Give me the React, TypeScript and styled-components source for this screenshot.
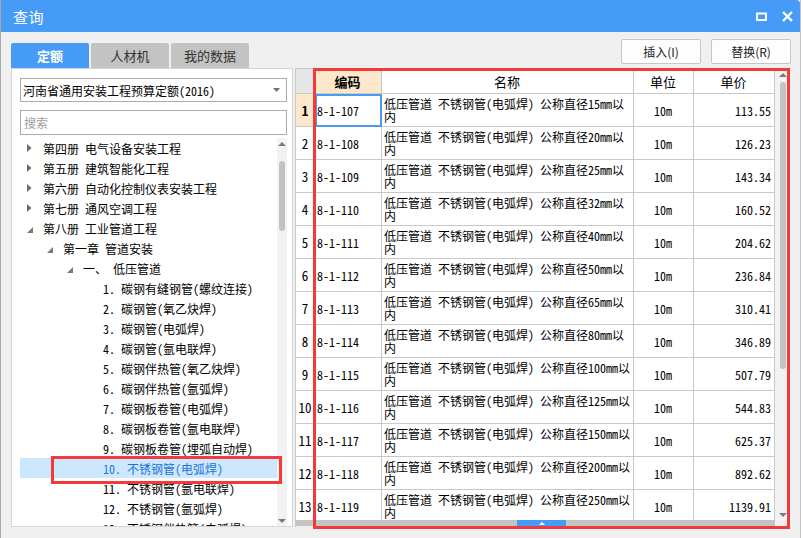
import React from 'react';
import styled, { createGlobalStyle } from 'styled-components';

const colors = {
  blue: '#469bf6',
  panelBg: '#f0f0f0',
  grid: '#c9c9c9',
  accent: '#fde8cb',
  mark: '#f23a3a',
  selectBg: '#cce8ff',
  selectText: '#1f73d6',
  tabIdle: '#c3c3c3',
};

const uiFont = `"Noto Sans CJK SC", "Microsoft YaHei", sans-serif`;

const GlobalStyle = createGlobalStyle`
  html, body {
    margin: 0;
    padding: 0;
    background: #fff;
    overflow: hidden;
  }
  *, *::before, *::after {
    box-sizing: border-box;
  }
`;

const Window = styled.div`
  width: 801px;
  height: 538px;
  display: flex;
  flex-direction: column;
  background: ${colors.panelBg};
  border-left: 1px solid #a9a9a9;
  border-right: 1px solid #c4c4c4;
  font-family: ${uiFont};
  overflow: hidden;
`;

const TitleBar = styled.header`
  flex: none;
  height: 32px;
  display: flex;
  align-items: center;
  justify-content: space-between;
  padding: 0 7px 0 12px;
  background: ${colors.blue};
  color: #fff;
  border-top-right-radius: 4px;
`;

const Title = styled.h1`
  margin: 0;
  font-size: 15px;
  font-weight: normal;
  letter-spacing: 0.5px;
`;

const WindowControls = styled.div`
  display: flex;
  align-items: center;
  gap: 15px;

  svg {
    display: block;
  }
`;

const TopRow = styled.div`
  flex: none;
  height: 36px;
  display: flex;
  justify-content: space-between;
  padding: 0 9px 0 10px;
`;

const Tabs = styled.nav`
  display: flex;
  gap: 2px;
  align-self: flex-end;
`;

const Tab = styled.button<{ $active?: boolean }>`
  width: 78px;
  height: 25px;
  padding: 0;
  border: none;
  border-radius: 2px 2px 0 0;
  font-family: ${uiFont};
  font-size: 13px;
  font-weight: ${(p) => (p.$active ? 'bold' : 'normal')};
  background: ${(p) => (p.$active ? colors.blue : colors.tabIdle)};
  color: ${(p) => (p.$active ? '#fff' : '#333')};
`;

const Actions = styled.div`
  display: flex;
  gap: 10px;
  padding-top: 7px;
`;

const ActionButton = styled.button`
  width: 80px;
  height: 25px;
  padding: 0;
  background: #fdfdfd;
  border: 1px solid #c6c6c6;
  border-radius: 2px;
  font-family: ${uiFont};
  font-size: 12px;
  color: #222;
`;

const Main = styled.main`
  flex: 1;
  min-height: 0;
  display: flex;
  gap: 2px;
  padding: 0 9px 11px 10px;
`;

/* ---------- left: catalogue tree ---------- */

const LeftPanel = styled.section`
  width: 282px;
  flex: none;
  display: flex;
  flex-direction: column;
  padding: 9px 5px 0 8px;
  background: #fff;
  border: 1px solid #d5d5d5;
  font-family: ${uiFont};
  font-size: 12px;
  font-feature-settings: 'hwid';
`;

const Select = styled.div`
  height: 24px;
  flex: none;
  display: flex;
  align-items: center;
  justify-content: space-between;
  padding: 0 6px 0 2px;
  border: 1px solid #ababab;
  color: #000;
`;

const SearchBox = styled.input`
  height: 25px;
  flex: none;
  margin-top: 8px;
  padding: 0 3px;
  border: 1px solid #ababab;
  outline: none;
  font-family: ${uiFont};
  font-size: 12px;

  &::placeholder {
    color: #a0a0a0;
  }
`;

const TreeArea = styled.div`
  flex: 1;
  min-height: 0;
  display: flex;
  margin-top: 3px;
`;

const TreeList = styled.ul`
  flex: 1;
  margin: 0;
  padding: 0;
  list-style: none;
  overflow-x: visible;
  overflow-y: clip;
`;

const TreeRow = styled.li<{ $level: number; $selected?: boolean; $marked?: boolean }>`
  position: relative;
  height: 20px;
  display: flex;
  align-items: center;
  padding-left: ${(p) => 7 + p.$level * 20}px;
  white-space: nowrap;
  background: ${(p) => (p.$selected ? colors.selectBg : 'transparent')};
  color: ${(p) => (p.$selected ? colors.selectText : '#000')};

  ${(p) =>
    p.$marked &&
    `
    &::after {
      content: '';
      position: absolute;
      left: 31px;
      top: -2px;
      width: 231px;
      height: 28px;
      border: 3px solid ${colors.mark};
      z-index: 1;
    }
  `}
`;

const Toggle = styled.span`
  width: 16px;
  flex: none;
  display: flex;
  align-items: center;

  svg {
    display: block;
  }
`;

const ScrollTrack = styled.div<{ $width: number }>`
  width: ${(p) => p.$width}px;
  flex: none;
  display: flex;
  flex-direction: column;
  align-items: center;
  background: #f2f2f2;
`;

const ScrollArrow = styled.div<{ $down?: boolean }>`
  width: 0;
  height: 0;
  margin: ${(p) => (p.$down ? 'auto 0 3px' : '4px 0 0')};
  border-left: 4px solid transparent;
  border-right: 4px solid transparent;
  ${(p) => (p.$down ? 'border-top: 4px solid #7a7a7a;' : 'border-bottom: 4px solid #7a7a7a;')}
`;

const ScrollThumb = styled.div<{ $top: number; $height: number }>`
  width: 6px;
  height: ${(p) => p.$height}px;
  margin-top: ${(p) => p.$top}px;
  border-radius: 3px;
  background: #c3c3c3;
`;

/* ---------- right: quota table ---------- */

const RightPanel = styled.section`
  position: relative;
  flex: 1;
  display: flex;
  flex-direction: column;
  border-left: 1px solid ${colors.grid};
  border-top: 1px solid ${colors.grid};
  font-family: ${uiFont};
  font-size: 12px;
  font-feature-settings: 'hwid';
`;

const GridArea = styled.div`
  height: 451px;
  flex: none;
  display: flex;
  background: #fff;
`;

const Table = styled.div`
  width: 479px;
  flex: none;
  overflow: hidden;
`;

const Row = styled.div<{ $header?: boolean }>`
  display: grid;
  grid-template-columns: 19px 67px 252px 60px 81px;
  height: ${(p) => (p.$header ? 25 : 33)}px;
`;

const Cell = styled.div<{
  $align?: 'left' | 'center' | 'right';
  $bg?: string;
  $bold?: boolean;
  $focus?: boolean;
  $size?: number;
}>`
  display: flex;
  align-items: center;
  justify-content: ${(p) =>
    p.$align === 'center' ? 'center' : p.$align === 'right' ? 'flex-end' : 'flex-start'};
  padding: 0 3px 0 2px;
  border-right: 1px solid ${colors.grid};
  border-bottom: 1px solid ${colors.grid};
  background: ${(p) => p.$bg || 'transparent'};
  font-weight: ${(p) => (p.$bold ? 'bold' : 'normal')};
  font-size: ${(p) => p.$size || 12}px;
  line-height: 13px;
  color: #000;
  overflow: hidden;
  ${(p) => p.$focus && `outline: 2px solid #4b9bf3; outline-offset: -2px;`}
`;

const RowNumber = styled(Cell)`
  padding: 0;
`;

const HScroll = styled.div`
  width: 479px;
  height: 6px;
  flex: none;
  display: flex;
  background: #c4c4c4;
`;

const CollapseHandle = styled.div`
  width: 49px;
  margin-left: 221px;
  display: flex;
  align-items: center;
  justify-content: center;
  background: ${colors.blue};

  &::before {
    content: '';
    border-left: 3px solid transparent;
    border-right: 3px solid transparent;
    border-bottom: 3px solid #fff;
  }
`;

const Mark = styled.div`
  position: absolute;
  left: 17px;
  top: -1px;
  width: 477px;
  height: 461px;
  border: 3px solid ${colors.mark};
  pointer-events: none;
  z-index: 2;
`;

type TreeNode = { label: string; level: number; state?: 'open' | 'closed'; selected?: boolean };

const tree: TreeNode[] = [
  { label: '第四册 电气设备安装工程', level: 0, state: 'closed' },
  { label: '第五册 建筑智能化工程', level: 0, state: 'closed' },
  { label: '第六册 自动化控制仪表安装工程', level: 0, state: 'closed' },
  { label: '第七册 通风空调工程', level: 0, state: 'closed' },
  { label: '第八册 工业管道工程', level: 0, state: 'open' },
  { label: '第一章 管道安装', level: 1, state: 'open' },
  { label: '一、 低压管道', level: 2, state: 'open' },
  { label: '1. 碳钢有缝钢管(螺纹连接)', level: 3 },
  { label: '2. 碳钢管(氧乙炔焊)', level: 3 },
  { label: '3. 碳钢管(电弧焊)', level: 3 },
  { label: '4. 碳钢管(氩电联焊)', level: 3 },
  { label: '5. 碳钢伴热管(氧乙炔焊)', level: 3 },
  { label: '6. 碳钢伴热管(氩弧焊)', level: 3 },
  { label: '7. 碳钢板卷管(电弧焊)', level: 3 },
  { label: '8. 碳钢板卷管(氩电联焊)', level: 3 },
  { label: '9. 碳钢板卷管(埋弧自动焊)', level: 3 },
  { label: '10. 不锈钢管(电弧焊)', level: 3, selected: true },
  { label: '11. 不锈钢管(氩电联焊)', level: 3 },
  { label: '12. 不锈钢管(氩弧焊)', level: 3 },
  { label: '13. 不锈钢伴热管(电弧焊)', level: 3 },
];

const quotas = [
  ['8-1-107', '15', '113.55'],
  ['8-1-108', '20', '126.23'],
  ['8-1-109', '25', '143.34'],
  ['8-1-110', '32', '160.52'],
  ['8-1-111', '40', '204.62'],
  ['8-1-112', '50', '236.84'],
  ['8-1-113', '65', '310.41'],
  ['8-1-114', '80', '346.89'],
  ['8-1-115', '100', '507.79'],
  ['8-1-116', '125', '544.83'],
  ['8-1-117', '150', '625.37'],
  ['8-1-118', '200', '892.62'],
  ['8-1-119', '250', '1139.91'],
];

const ToggleIcon = ({ state }: { state?: 'open' | 'closed' }) => {
  if (state === 'closed') {
    return (
      <svg width="5" height="8" viewBox="0 0 5 8">
        <path d="M0 0 L4.5 4 L0 8 Z" fill="#6b6b6b" />
      </svg>
    );
  }
  if (state === 'open') {
    return (
      <svg width="6" height="6" viewBox="0 0 6 6" style={{ marginTop: 4 }}>
        <path d="M6 0 L6 6 L0 6 Z" fill="#7a7a7a" />
      </svg>
    );
  }
  return null;
};

const App = () => {
  return (
    <>
      <GlobalStyle />
      <Window>
        <TitleBar>
          <Title>查询</Title>
          <WindowControls>
            <svg width="11" height="9" viewBox="0 0 11 9">
              <rect x="1" y="1.5" width="9" height="6.5" fill="none" stroke="#fff" strokeWidth="2" />
            </svg>
            <svg width="11" height="11" viewBox="0 0 11 11">
              <path d="M1 1 L10 10 M10 1 L1 10" stroke="#fff" strokeWidth="2.4" />
            </svg>
          </WindowControls>
        </TitleBar>

        <TopRow>
          <Tabs>
            <Tab $active>定额</Tab>
            <Tab>人材机</Tab>
            <Tab>我的数据</Tab>
          </Tabs>
          <Actions>
            <ActionButton>插入(I)</ActionButton>
            <ActionButton>替换(R)</ActionButton>
          </Actions>
        </TopRow>

        <Main>
          <LeftPanel>
            <Select>
              <span>河南省通用安装工程预算定额(2016)</span>
              <svg width="7" height="4" viewBox="0 0 7 4">
                <path d="M0 0 L7 0 L3.5 4 Z" fill="#707070" />
              </svg>
            </Select>
            <SearchBox placeholder="搜索" />
            <TreeArea>
              <TreeList>
                {tree.map((node) => (
                  <TreeRow
                    key={node.label}
                    $level={node.level}
                    $selected={node.selected}
                    $marked={node.selected}
                  >
                    <Toggle>
                      <ToggleIcon state={node.state} />
                    </Toggle>
                    {node.label}
                  </TreeRow>
                ))}
              </TreeList>
              <ScrollTrack $width={10}>
                <ScrollArrow />
                <ScrollThumb $top={15} $height={70} />
                <ScrollArrow $down />
              </ScrollTrack>
            </TreeArea>
          </LeftPanel>

          <RightPanel>
            <GridArea>
              <Table>
                <Row $header>
                  <Cell $bg="#e6e6e6" />
                  <Cell $align="center" $bg={colors.accent} $bold $size={13}>
                    编码
                  </Cell>
                  <Cell $align="center" $size={13}>名称</Cell>
                  <Cell $align="center" $size={13}>单位</Cell>
                  <Cell $align="center" $size={13}>单价</Cell>
                </Row>
                {quotas.map(([code, size, price], i) => (
                  <Row key={code}>
                    <RowNumber
                      $align="center"
                      $size={13}
                      $bold={i === 0}
                      $bg={i === 0 ? colors.accent : undefined}
                    >
                      {i + 1}
                    </RowNumber>
                    <Cell $focus={i === 0}>{code}</Cell>
                    <Cell>{`低压管道 不锈钢管(电弧焊) 公称直径${size}mm以内`}</Cell>
                    <Cell $align="center">10m</Cell>
                    <Cell $align="right">{price}</Cell>
                  </Row>
                ))}
              </Table>
              <ScrollTrack $width={16}>
                <ScrollArrow />
                <ScrollThumb $top={5} $height={287} />
                <ScrollArrow $down />
              </ScrollTrack>
            </GridArea>
            <HScroll>
              <CollapseHandle />
            </HScroll>
            <Mark />
          </RightPanel>
        </Main>
      </Window>
    </>
  );
};

export default App;
